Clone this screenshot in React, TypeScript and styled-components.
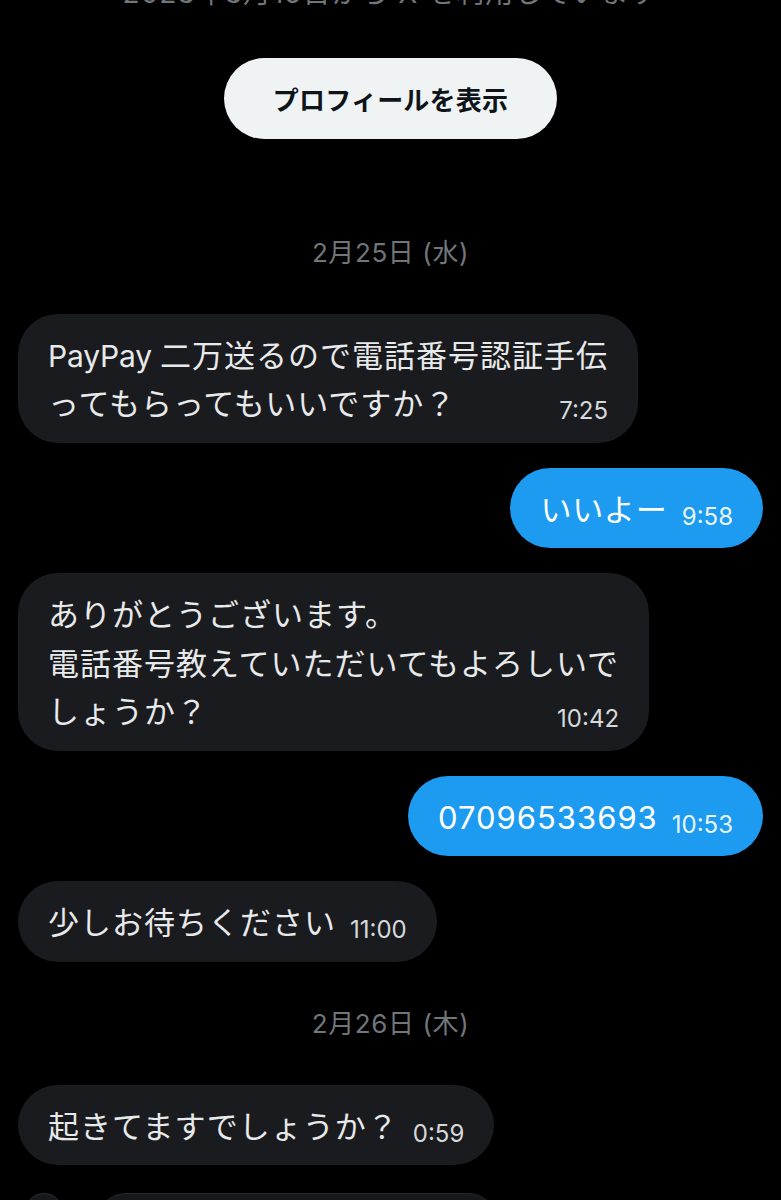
import React from "react";
import styled, { createGlobalStyle } from "styled-components";

const GlobalStyle = createGlobalStyle`
  html, body {
    margin: 0;
    padding: 0;
    background: #000;
  }
  body {
    font-family: Inter, "Noto Sans CJK JP", sans-serif;
    overflow: hidden;
  }
`;

const Page = styled.div`
  width: 781px;
  height: 1200px;
  box-sizing: border-box;
  padding: 0 18px;
  background: #000;
  display: flex;
  flex-direction: column;
  align-items: stretch;
  overflow: hidden;
  & > * {
    flex-shrink: 0;
  }
`;

const JoinedText = styled.div`
  margin-top: -22px;
  text-align: center;
  font-size: 28px;
  line-height: 30px;
  letter-spacing: 1px;
  color: #71767b;
  white-space: nowrap;
`;

const ProfileButton = styled.button`
  align-self: center;
  margin-top: 50px;
  width: 333px;
  height: 81px;
  border: none;
  border-radius: 41px;
  background: #eff3f4;
  color: #0f1419;
  font-family: "Noto Sans CJK JP", sans-serif;
  font-weight: 700;
  font-size: 26px;
  letter-spacing: 0.2px;
  display: flex;
  align-items: center;
  justify-content: center;
  padding: 0;
`;

const Thread = styled.div`
  margin-top: 76px;
  display: flex;
  flex-direction: column;
  gap: 24.5px;
  & > * {
    flex-shrink: 0;
  }
`;

const DateLabel = styled.div`
  margin: 23px 0 21px;
  text-align: center;
  font-size: 26px;
  line-height: 30px;
  letter-spacing: 0.6px;
  color: #71767b;
`;

const Row = styled.div<{ $out?: boolean }>`
  display: flex;
  justify-content: ${(p) => (p.$out ? "flex-end" : "flex-start")};
`;

const Bubble = styled.div<{ $out?: boolean }>`
  display: flex;
  flex-direction: column;
  box-sizing: border-box;
  padding: 18px 30px 14px 30px;
  border-radius: 40px;
  background: ${(p) => (p.$out ? "#1d9bf0" : "#1a1b1e")};
  color: ${(p) => (p.$out ? "#ffffff" : "#e7e9ea")};
  font-size: 31px;
  line-height: 48.75px;
  letter-spacing: 1px;
  white-space: nowrap;
`;

const Line = styled.div``;

const Latin = styled.span`
  font-size: 30px;
  letter-spacing: -0.2px;
`;

const LastLine = styled.div`
  display: flex;
  align-items: baseline;
  justify-content: space-between;
  gap: 14px;
  height: 48.75px;
`;

const Time = styled.span<{ $out?: boolean }>`
  font-family: Inter, sans-serif;
  font-size: 24px;
  line-height: 1;
  letter-spacing: 0;
  color: ${(p) => (p.$out ? "rgba(255,255,255,0.92)" : "#d6d9db")};
  display: inline-block;
  transform: translateY(4px);
`;

const Composer = styled.div`
  margin-top: 28px;
  display: flex;
  align-items: flex-start;
  gap: 33px;
  padding-left: 7px;
`;

const AvatarDot = styled.div`
  width: 36px;
  height: 36px;
  border-radius: 50%;
  background: #16181c;
  border: 1px solid #2a2d31;
  flex: none;
`;

const InputBar = styled.div`
  width: 402px;
  height: 60px;
  border-radius: 30px;
  background: #16181c;
  border: 1px solid #25282c;
  box-sizing: border-box;
`;

type Item =
  | { kind: "date"; text: string }
  | { kind: "msg"; out?: boolean; lines: React.ReactNode[]; time: string };

const items: Item[] = [
  { kind: "date", text: "2月25日 (水)" },
  {
    kind: "msg",
    lines: [
      <>
        <Latin>PayPay </Latin>二万送るので電話番号認証手伝
      </>,
      "ってもらってもいいですか？",
    ],
    time: "7:25",
  },
  { kind: "msg", out: true, lines: ["いいよー"], time: "9:58" },
  {
    kind: "msg",
    lines: [
      "ありがとうございます。",
      "電話番号教えていただいてもよろしいで",
      "しょうか？",
    ],
    time: "10:42",
  },
  { kind: "msg", out: true, lines: ["07096533693"], time: "10:53" },
  { kind: "msg", lines: ["少しお待ちください"], time: "11:00" },
  { kind: "date", text: "2月26日 (木)" },
  { kind: "msg", lines: ["起きてますでしょうか？"], time: "0:59" },
];

export default function App() {
  return (
    <>
      <GlobalStyle />
      <Page>
        <JoinedText>2023年3月15日から X を利用しています</JoinedText>
        <ProfileButton>プロフィールを表示</ProfileButton>
        <Thread>
          {items.map((it, i) =>
            it.kind === "date" ? (
              <DateLabel key={i}>{it.text}</DateLabel>
            ) : (
              <Row key={i} $out={it.out}>
                <Bubble $out={it.out}>
                  {it.lines.slice(0, -1).map((l, j) => (
                    <Line key={j}>{l}</Line>
                  ))}
                  <LastLine>
                    <span>{it.lines[it.lines.length - 1]}</span>
                    <Time $out={it.out}>{it.time}</Time>
                  </LastLine>
                </Bubble>
              </Row>
            )
          )}
        </Thread>
        <Composer>
          <AvatarDot />
          <InputBar />
        </Composer>
      </Page>
    </>
  );
}
